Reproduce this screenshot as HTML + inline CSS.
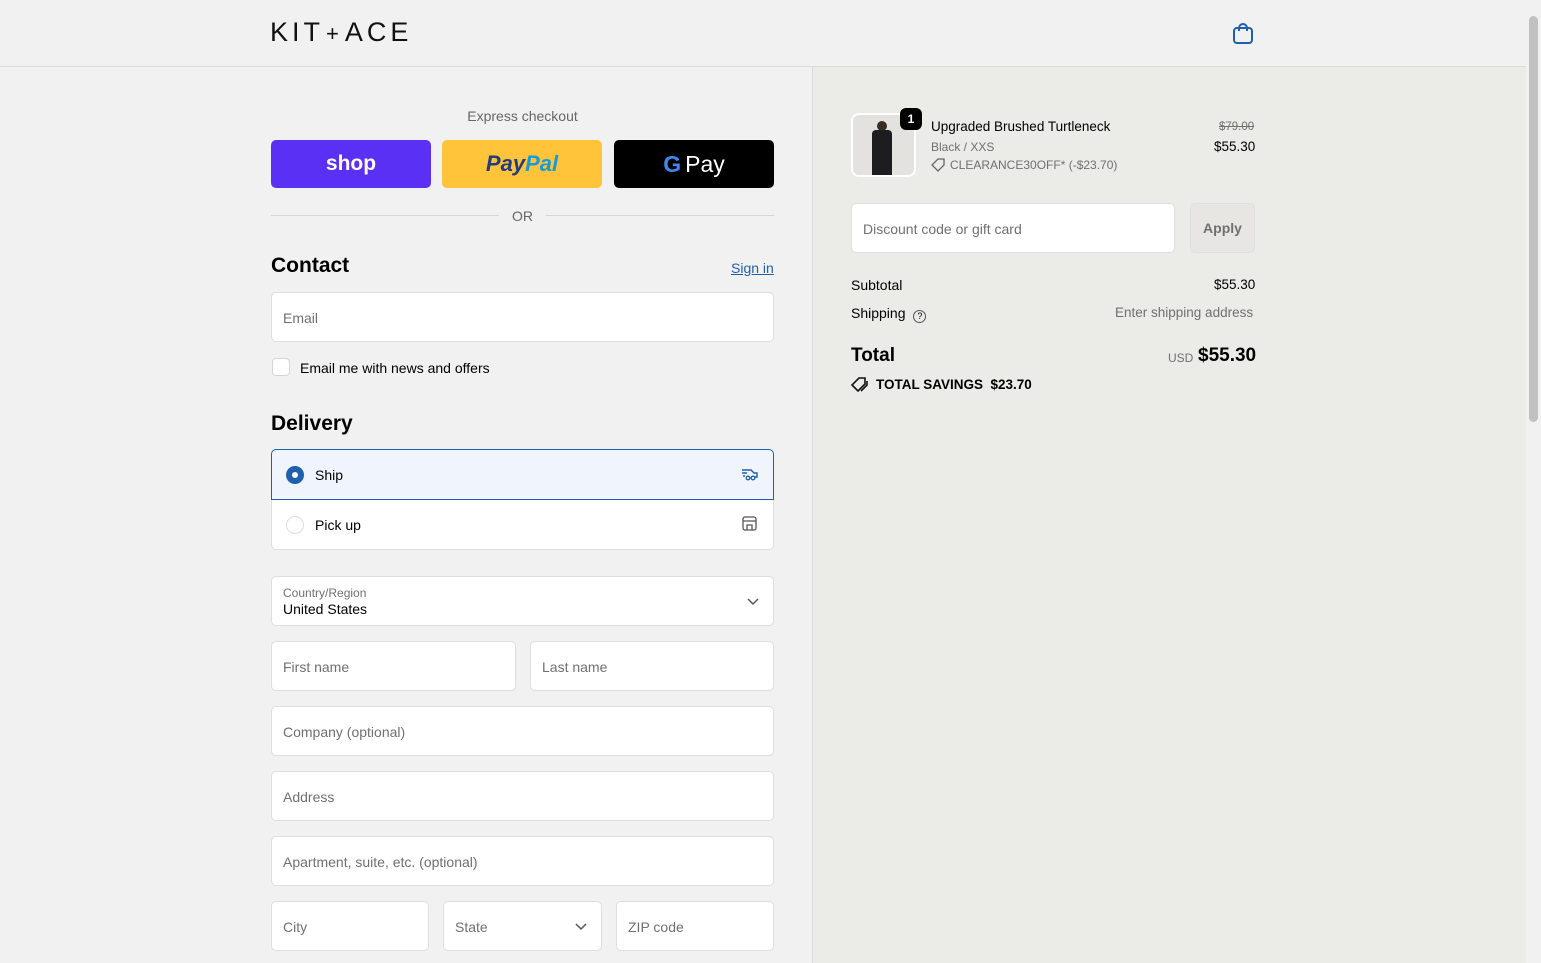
<!DOCTYPE html>
<html><head><style>
*{box-sizing:border-box;margin:0;padding:0}
body{width:1541px;height:963px;overflow:hidden;font-family:"Liberation Sans",sans-serif;background:#f1f1f1;position:relative;color:#000;font-size:14px}
.abs{position:absolute}
.hdr{left:0;top:0;width:1526px;height:67px;border-bottom:1px solid #dcdcdc;background:#f1f1f1}
.right{left:812px;top:67px;width:714px;height:896px;background:#ebebe7;border-left:1px solid #dcdcdc}
.sb{left:1526px;top:0;width:15px;height:963px;background:#f1f1f1}
.thumb{left:1529px;top:16px;width:9px;height:406px;background:#c1c1c1;border-radius:5px}
.inp{position:absolute;background:#fff;border:1px solid #dedede;border-radius:5px;height:50px;color:#707070;font-size:14px;padding-left:11px;line-height:50px}
.btn{position:absolute;top:140px;height:48px;width:160px;border-radius:5px;display:flex;align-items:center;justify-content:center}
h2{position:absolute;font-size:21px;font-weight:bold}
</style></head><body>
<div class="abs hdr"></div>
<div class="abs" style="left:270px;top:17px;font-size:27px;letter-spacing:4px;color:#111">KIT<span style="font-size:22px;margin:0 2px">+</span>ACE</div>
<svg class="abs" style="left:1232px;top:22px" width="22" height="23" viewBox="0 0 22 23"><rect x="2" y="6" width="18" height="15" rx="3" fill="none" stroke="#1f5fb0" stroke-width="2"/><path d="M7 9V6a4 4 0 0 1 8 0v3" fill="none" stroke="#1f5fb0" stroke-width="2"/></svg>
<div class="abs right"></div>
<div class="abs sb"></div><div class="abs thumb"></div>

<div class="abs" style="left:271px;width:503px;top:108px;text-align:center;color:#666;font-size:14px">Express checkout</div>
<div class="btn" style="left:271px;background:#5a31f4;color:#fff;font-weight:bold;font-size:21px">shop</div>
<div class="btn" style="left:442px;background:#ffc439;font-style:italic;font-weight:bold;font-size:22px"><span style="color:#253b80">Pay</span><span style="color:#179bd7">Pal</span></div>
<div class="btn" style="left:614px;width:160px;background:#000;color:#fff;font-size:23px"><b style="color:#4285f4;margin-right:4px">G</b>Pay</div>
<div class="abs" style="left:271px;top:215px;width:228px;border-top:1px solid #d6d6d6"></div>
<div class="abs" style="left:546px;top:215px;width:228px;border-top:1px solid #d6d6d6"></div>
<div class="abs" style="left:512px;top:208px;color:#666">OR</div>

<h2 style="left:271px;top:254px">Contact</h2>
<div class="abs" style="left:731px;top:260px;color:#1f5fb0;text-decoration:underline">Sign in</div>
<div class="inp" style="left:271px;top:292px;width:503px">Email</div>
<div class="abs" style="left:272px;top:358px;width:18px;height:18px;background:#fff;border:1px solid #d6d6d6;border-radius:4px"></div>
<div class="abs" style="left:300px;top:360px">Email me with news and offers</div>

<h2 style="left:271px;top:412px">Delivery</h2>
<div class="abs" style="left:271px;top:449px;width:503px;height:101px;background:#fff;border:1px solid #dedede;border-radius:5px"></div>
<div class="abs" style="left:271px;top:449px;width:503px;height:51px;background:#f0f5fd;border:1px solid #1f5fb0;border-radius:5px 5px 0 0"></div>
<div class="abs" style="left:286px;top:466px;width:18px;height:18px;border-radius:50%;background:#1f5fb0"><div style="margin:6px;width:6px;height:6px;border-radius:50%;background:#fff"></div></div>
<div class="abs" style="left:315px;top:467px">Ship</div>
<div class="abs" style="left:286px;top:516px;width:18px;height:18px;border-radius:50%;border:1px solid #ddd"></div>
<div class="abs" style="left:315px;top:517px">Pick up</div>
<svg class="abs" style="left:741px;top:466px" width="18" height="15" viewBox="0 0 18 15"><path d="M1 4h9l3 3h3v4h-2M1 7h5M2 10h2" fill="none" stroke="#1f5fb0" stroke-width="1.4"/><circle cx="7" cy="12" r="1.8" fill="none" stroke="#1f5fb0" stroke-width="1.3"/><circle cx="12" cy="12" r="1.8" fill="none" stroke="#1f5fb0" stroke-width="1.3"/></svg>
<svg class="abs" style="left:742px;top:516px" width="15" height="15" viewBox="0 0 15 15"><rect x="1" y="1" width="13" height="13" rx="2" fill="none" stroke="#555" stroke-width="1.3"/><path d="M1 5h13M5 14v-5h5v5" fill="none" stroke="#555" stroke-width="1.3"/></svg>

<div class="inp" style="left:271px;top:576px;width:503px;line-height:normal;padding-top:9px"><div style="font-size:12px;color:#707070">Country/Region</div><div style="color:#000;font-size:14px;margin-top:1px">United States</div></div>
<svg class="abs" style="left:747px;top:598px" width="12" height="8"><path d="M1 1l5 5 5-5" fill="none" stroke="#555" stroke-width="1.5"/></svg>
<div class="inp" style="left:271px;top:641px;width:245px">First name</div>
<div class="inp" style="left:530px;top:641px;width:244px">Last name</div>
<div class="inp" style="left:271px;top:706px;width:503px">Company (optional)</div>
<div class="inp" style="left:271px;top:771px;width:503px">Address</div>
<div class="inp" style="left:271px;top:836px;width:503px">Apartment, suite, etc. (optional)</div>
<div class="inp" style="left:271px;top:901px;width:158px">City</div>
<div class="inp" style="left:443px;top:901px;width:159px">State</div>
<svg class="abs" style="left:575px;top:923px" width="12" height="8"><path d="M1 1l5 5 5-5" fill="none" stroke="#555" stroke-width="1.5"/></svg>
<div class="inp" style="left:616px;top:901px;width:158px">ZIP code</div>

<div class="abs" style="left:851px;top:113px;width:65px;height:64px;border-radius:8px;border:2px solid #fff;background:#e4e2df;overflow:hidden">
<div style="position:absolute;left:24px;top:6px;width:10px;height:10px;border-radius:50%;background:#3a2d25"></div>
<div style="position:absolute;left:19px;top:15px;width:20px;height:47px;background:#1d1d1f;border-radius:4px 4px 0 0"></div></div>
<div class="abs" style="left:900px;top:108px;width:22px;height:22px;border-radius:6px;background:#000;color:#fff;font-size:12px;font-weight:bold;text-align:center;line-height:22px">1</div>
<div class="abs" style="left:931px;top:119px;font-size:13.5px">Upgraded Brushed Turtleneck</div>
<div class="abs" style="left:931px;top:140px;font-size:12px;color:#707070">Black / XXS</div>
<svg class="abs" style="left:931px;top:158px" width="14" height="14" viewBox="0 0 14 14"><path d="M7 1h6v6l-6 6-6-6z" fill="none" stroke="#666" stroke-width="1.3"/></svg>
<div class="abs" style="left:950px;top:158px;font-size:12px;color:#707070">CLEARANCE30OFF* (-$23.70)</div>
<div class="abs" style="left:1219px;top:121px;font-size:11.5px;color:#707070;text-decoration:line-through">$79.00</div>
<div class="abs" style="left:1214px;top:139px;font-size:13.5px">$55.30</div>
<div class="inp" style="left:851px;top:203px;width:324px">Discount code or gift card</div>
<div class="abs" style="left:1190px;top:203px;width:65px;height:50px;border:1px solid #dedede;border-radius:5px;background:#e8e6e2;color:#707070;font-weight:bold;text-align:center;line-height:48px">Apply</div>
<div class="abs" style="left:851px;top:277px">Subtotal</div>
<div class="abs" style="left:1214px;top:277px;font-size:13.5px">$55.30</div>
<div class="abs" style="left:851px;top:305px">Shipping <span style="display:inline-block;width:13px;height:13px;border:1px solid #555;border-radius:50%;font-size:9px;text-align:center;line-height:11px;margin-left:4px;vertical-align:-1px">?</span></div>
<div class="abs" style="left:1115px;top:305px;color:#707070;font-size:13.5px">Enter shipping address</div>
<div class="abs" style="left:851px;top:345px;font-size:19px;font-weight:bold">Total</div>
<div class="abs" style="left:1168px;top:351px;font-size:12px;color:#707070">USD</div>
<div class="abs" style="left:1198px;top:345px;font-size:19px;font-weight:bold">$55.30</div>
<svg class="abs" style="left:851px;top:377px" width="18" height="16" viewBox="0 0 18 16"><path d="M8 1h6v6l-7 7-6-6z" fill="none" stroke="#111" stroke-width="1.6"/><path d="M16 4v4l-6 6" fill="none" stroke="#111" stroke-width="1.6"/></svg>
<div class="abs" style="left:876px;top:377px;font-weight:bold;font-size:13.5px">TOTAL SAVINGS&nbsp; $23.70</div>
</body></html>
